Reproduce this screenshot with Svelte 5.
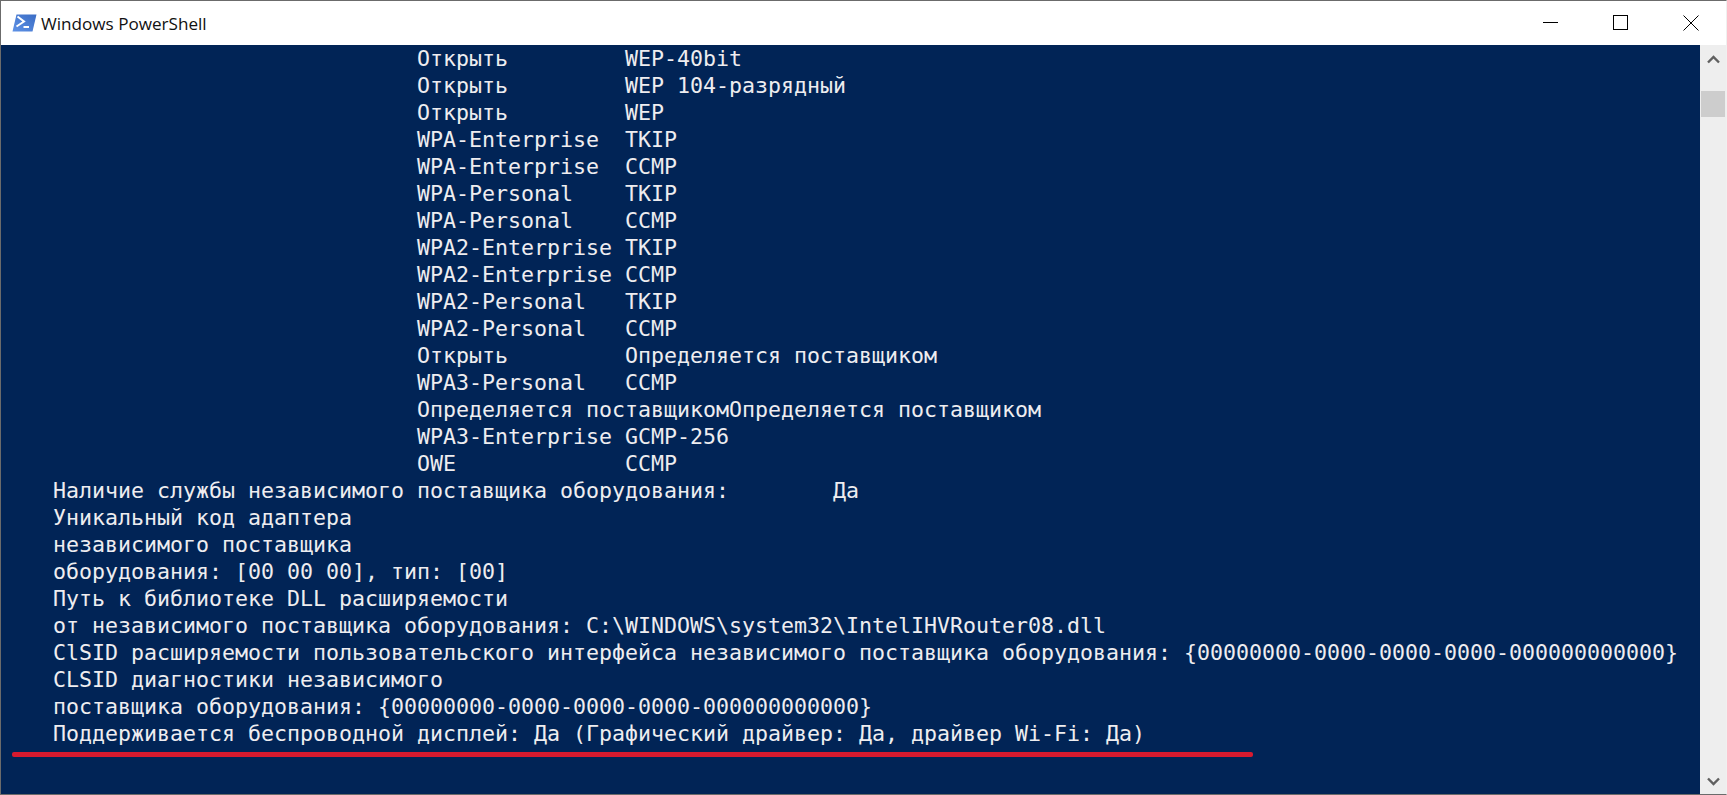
<script>
  const lines = [
    "                                Открыть         WEP-40bit",
    "                                Открыть         WEP 104-разрядный",
    "                                Открыть         WEP",
    "                                WPA-Enterprise  TKIP",
    "                                WPA-Enterprise  CCMP",
    "                                WPA-Personal    TKIP",
    "                                WPA-Personal    CCMP",
    "                                WPA2-Enterprise TKIP",
    "                                WPA2-Enterprise CCMP",
    "                                WPA2-Personal   TKIP",
    "                                WPA2-Personal   CCMP",
    "                                Открыть         Определяется поставщиком",
    "                                WPA3-Personal   CCMP",
    "                                Определяется поставщикомОпределяется поставщиком",
    "                                WPA3-Enterprise GCMP-256",
    "                                OWE             CCMP",
    "    Наличие службы независимого поставщика оборудования:        Да",
    "    Уникальный код адаптера",
    "    независимого поставщика",
    "    оборудования: [00 00 00], тип: [00]",
    "    Путь к библиотеке DLL расширяемости",
    "    от независимого поставщика оборудования: C:\\WINDOWS\\system32\\IntelIHVRouter08.dll",
    "    ClSID расширяемости пользовательского интерфейса независимого поставщика оборудования: {00000000-0000-0000-0000-000000000000}",
    "    CLSID диагностики независимого",
    "    поставщика оборудования: {00000000-0000-0000-0000-000000000000}",
    "    Поддерживается беспроводной дисплей: Да (Графический драйвер: Да, драйвер Wi-Fi: Да)",
  ]
</script>

<div class="window">
  <header class="titlebar">
    <svg class="ps-icon" width="25" height="18" viewBox="0 0 25 18">
      <defs>
        <linearGradient id="ps-fill" x1="0" y1="1" x2="1" y2="0">
          <stop offset="0" stop-color="#5f92e6" />
          <stop offset="1" stop-color="#3a6cc4" />
        </linearGradient>
      </defs>
      <path d="M4.5 0.5H24.5L20.5 17.5H0.5Z" fill="url(#ps-fill)" />
      <path d="M5.5 2.5L12 7.5L4.5 12.5" fill="none" stroke="#fff" stroke-width="2" />
      <path d="M11.5 13H17" stroke="#fff" stroke-width="2" />
    </svg>
    <span class="title">Windows PowerShell</span>
    <div class="controls">
      <svg width="16" height="16" viewBox="0 0 16 16"><path d="M0 7.5H15" stroke="#000" /></svg>
      <svg width="16" height="16" viewBox="0 0 16 16"><rect x="0.5" y="0.5" width="14" height="14" fill="none" stroke="#000" /></svg>
      <svg width="16" height="16" viewBox="0 0 16 16"><path d="M0.5 0.5L15.5 15.5M15.5 0.5L0.5 15.5" stroke="#000" /></svg>
    </div>
  </header>
  <div class="body">
    <main class="console">
      {#each lines as line}
        <pre>{line}</pre>
      {/each}
      <div class="underline"></div>
    </main>
    <aside class="scrollbar">
      <svg width="13" height="9" viewBox="0 0 13 9"><path d="M1 7.5L6.5 2L12 7.5" fill="none" stroke="#606060" stroke-width="2.4" /></svg>
      <div class="track"><div class="thumb"></div></div>
      <svg width="13" height="9" viewBox="0 0 13 9"><path d="M1 1.5L6.5 7L12 1.5" fill="none" stroke="#606060" stroke-width="2.4" /></svg>
    </aside>
  </div>
</div>

<style>
  :global(body) {
    margin: 0;
    background: #fff;
  }

  .window {
    display: flex;
    flex-direction: column;
    height: 795px;
    box-sizing: border-box;
    border: 1px solid #6b6b6b;
    border-right-color: #f0f0f0;
  }

  .titlebar {
    display: flex;
    align-items: center;
    height: 44px;
    flex-shrink: 0;
    padding-left: 11px;
    background: #fff;
  }

  .ps-icon {
    margin-right: 4px;
  }

  .title {
    font: 17.1px "Open Sans", sans-serif;
    color: #111;
  }

  .controls {
    display: flex;
    align-items: center;
    gap: 54px;
    margin-left: auto;
    margin-right: 27px;
  }

  .body {
    display: flex;
    flex: 1;
    min-height: 0;
  }

  .console {
    position: relative;
    flex: 1;
    background: #012456;
  }

  pre {
    margin: 0;
    height: 27px;
    font: 21.6px/27px "DejaVu Sans Mono", monospace;
    color: #eeedf0;
  }

  .underline {
    position: absolute;
    left: 11px;
    top: 707px;
    width: 1241px;
    height: 5px;
    border-radius: 2px;
    background: #d71a2f;
  }

  .scrollbar {
    display: flex;
    flex-direction: column;
    align-items: center;
    width: 26px;
    padding: 10px 0 8px;
    box-sizing: border-box;
    background: #eeeeee;
  }

  .track {
    flex: 1;
    width: 100%;
    padding: 27px 1px 0;
    box-sizing: border-box;
  }

  .thumb {
    height: 26px;
    background: #cdcdcd;
  }
</style>
